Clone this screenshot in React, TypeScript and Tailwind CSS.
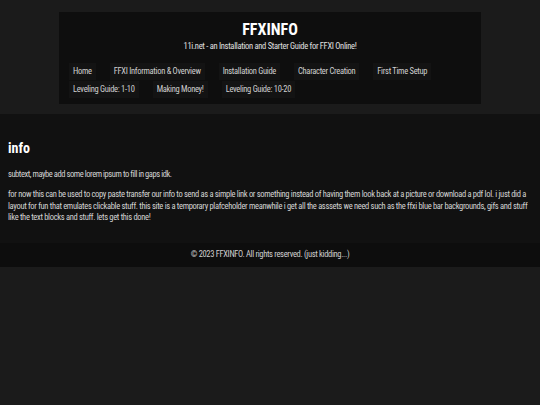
import React from "react";

const navItems = [
  "Home",
  "FFXI Information & Overview",
  "Installation Guide",
  "Character Creation",
  "First Time Setup",
  "Leveling Guide: 1-10",
  "Making Money!",
  "Leveling Guide: 10-20",
];

export default function App() {
  return (
    <div className="min-h-[405px] bg-[#1b1b1b] font-['Roboto',sans-serif] font-stretch-condensed text-[#d4d4d4]">
      <header className="px-[59px] pt-[12px] pb-[10px]">
        <div className="bg-[#0e0e0e] px-[10px] pt-[8px] pb-[6px]">
          <h1 className="text-center text-[16px] font-bold leading-[20px] text-white">FFXINFO</h1>
          <p className="text-center text-[8.5px] leading-[12px] tracking-[-0.3px] text-[#e0e0e0]">
            11i.net - an Installation and Starter Guide for FFXI Online!
          </p>
          <nav className="mt-[11px] flex flex-wrap gap-y-[1px]">
            {navItems.map((item) => (
              <a
                key={item}
                className="mr-[14px] flex h-[17px] items-center bg-[#131313] px-[4px] text-[8.5px] tracking-[-0.3px] text-[#d0d0d0]"
              >
                {item}
              </a>
            ))}
          </nav>
        </div>
      </header>
      <main className="bg-[#111111] px-[8px] pt-[25px] pb-[19px]">
        <h2 className="text-[14px] font-bold leading-[18px] text-white">info</h2>
        <p className="mt-[12px] text-[8.5px] leading-[11px] tracking-[-0.45px]">
          subtext, maybe add some lorem ipsum to fill in gaps idk.
        </p>
        <p className="mt-[9px] text-[8.5px] leading-[11.5px] tracking-[-0.33px]">
          for now this can be used to copy paste transfer our info to send as a simple link or something instead of
          having them look back at a picture or download a pdf lol. i just did a layout for fun that emulates
          clickable stuff. this site is a temporary plafceholder meanwhile i get all the asssets we need such as the
          ffxi blue bar backgrounds, gifs and stuff like the text blocks and stuff. lets get this done!
        </p>
      </main>
      <footer className="flex h-[24px] items-center justify-center bg-[#0d0d0d] text-[8.5px] tracking-[-0.33px] text-[#cfcfcf]">
        © 2023 FFXINFO. All rights reserved. (just kidding...)
      </footer>
    </div>
  );
}
